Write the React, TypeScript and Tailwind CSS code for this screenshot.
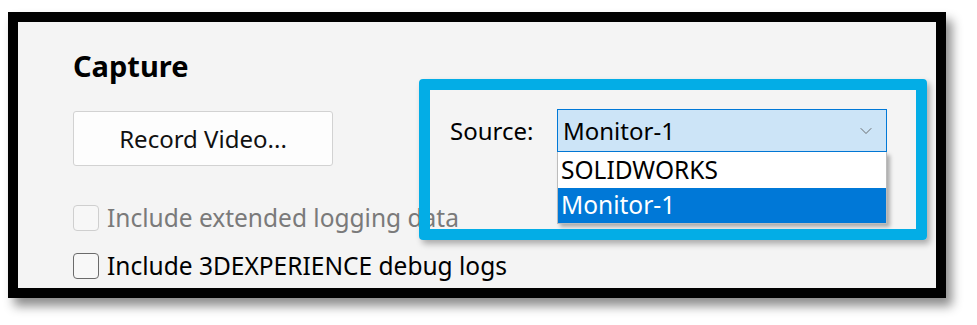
import { ChevronDown } from 'lucide-react';

const font = { fontFamily: '"Noto Sans", "Open Sans", sans-serif' };

export default function App() {
  return (
    <div className="w-[977px] h-[325px] bg-white overflow-hidden pt-[12px] pl-[8px]" style={font}>
      <div className="w-[938px] h-[286px] border-[10px] border-black shadow-[6px_8px_10px_rgba(0,0,0,0.45)]">
        <div className="relative w-full h-full bg-[#f4f4f4] pl-[55px] pt-[29px] text-black">
          <h2 className="text-[29px] leading-[29px] font-bold">Capture</h2>

          <div className="flex items-start mt-[29px]">
            <button className="mt-[2px] w-[260px] h-[55px] bg-[#fdfdfd] border border-[#d2d2d2] rounded-[3px] text-[24px] text-[#111]">
              Record Video...
            </button>
            <div className="ml-[117px] w-[107px] h-[43px] flex items-center text-[24px]">Source:</div>
            <div className="relative">
              <div className="w-[330px] h-[43px] bg-[#cce4f7] border border-[#0078d7] flex items-center justify-between pl-[5px] pr-[10px] text-[24px]">
                <span>Monitor-1</span>
                <ChevronDown className="w-[20px] h-[20px] text-[#555]" strokeWidth={1} />
              </div>
              <div className="absolute left-0 top-full w-[330px] bg-white border border-[#bcbcbc] border-t-0 shadow-[3px_3px_4px_rgba(0,0,0,0.3)] text-[24.5px]">
                <div className="h-[36px] flex items-center pl-[3px]">SOLIDWORKS</div>
                <div className="h-[35px] flex items-center pl-[3px] bg-[#0078d7] text-white">Monitor-1</div>
              </div>
            </div>
          </div>

          <div className="flex items-center gap-[8px] mt-[39px] h-[26px]">
            <span className="w-[26px] h-[26px] rounded-[4px] border border-[#cfcfcf] bg-[#f7f7f7]" />
            <span className="text-[24.5px] text-[#7a7a7a]">Include extended logging data</span>
          </div>
          <div className="flex items-center gap-[8px] mt-[22px] h-[26px]">
            <span className="w-[26px] h-[26px] rounded-[4px] border border-[#6b6b6b] bg-[#f8f8f8]" />
            <span className="text-[24.5px]">Include 3DEXPERIENCE debug logs</span>
          </div>

          <div className="absolute left-[401px] top-[57px] w-[508px] h-[161px] border-[11px] border-[#03ade6] rounded-[4px] shadow-[3px_4px_6px_rgba(0,0,0,0.3)] pointer-events-none" />
        </div>
      </div>
    </div>
  );
}
